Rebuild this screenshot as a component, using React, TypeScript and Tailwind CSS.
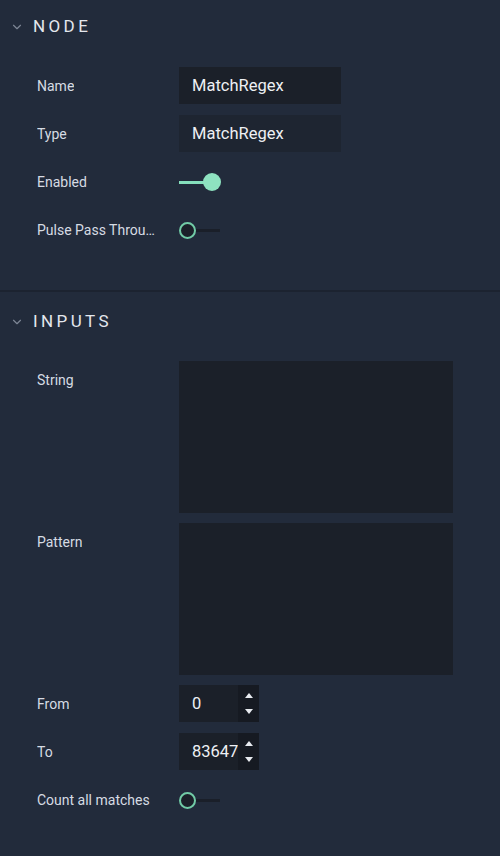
import { ChevronDown } from 'lucide-react';

const font = { fontFamily: 'Roboto, "Noto Sans", sans-serif' };

function Header({ title }: { title: string }) {
  return (
    <div className="flex items-center h-[54px] pl-[10px]">
      <ChevronDown size={14} strokeWidth={2} className="text-[#7d8594]" />
      <span className="ml-[9px] text-[17px] tracking-[0.2em] text-[#e4e7ed]">{title}</span>
    </div>
  );
}

function Row({ label, children }: { label: string; children: React.ReactNode }) {
  return (
    <div className="flex items-start">
      <div className="w-[179px] shrink-0 pl-[37px] pr-[21px] h-[38px] flex items-center">
        <span className="text-[14px] text-[#d6dbe3] truncate">{label}</span>
      </div>
      {children}
    </div>
  );
}

function TextBox({ value, dim }: { value: string; dim?: boolean }) {
  return (
    <div className={`w-[162px] h-[37px] flex items-center pt-[2px] px-[13px] text-[16.5px] text-[#eef0f4] ${dim ? 'bg-[#1e2531]' : 'bg-[#1b2029]'}`}>
      {value}
    </div>
  );
}

function Toggle({ on }: { on: boolean }) {
  if (on) {
    return (
      <div className="h-[38px] flex items-center">
        <div className="w-[26px] h-[3px] bg-[#86dfbd]" />
        <div className="w-[18px] h-[18px] -ml-[2px] rounded-full bg-[#8ee2c0]" />
      </div>
    );
  }
  return (
    <div className="h-[38px] flex items-center">
      <div className="w-[17px] h-[17px] rounded-full border-2 border-[#71cba6] bg-[#1b2029]" />
      <div className="w-[24px] h-[3px] bg-[#1a1f29]" />
    </div>
  );
}

function NumberBox({ value }: { value: string }) {
  return (
    <div className="w-[80px] h-[37px] flex bg-[#1b2029]">
      <div className="flex-1 flex items-center pt-[2px] pl-[13px] text-[16.5px] text-[#eef0f4]">{value}</div>
      <div className="w-[21px] bg-[#161a22] flex flex-col items-center justify-center gap-[11px]">
        <svg width="8" height="5" viewBox="0 0 8 5"><path d="M0 5 L4 0 L8 5 Z" fill="#e8ebf0" /></svg>
        <svg width="8" height="5" viewBox="0 0 8 5"><path d="M0 0 L4 5 L8 0 Z" fill="#e8ebf0" /></svg>
      </div>
    </div>
  );
}

export default function App() {
  return (
    <div className="w-[500px] h-[856px] bg-[#222b3b] overflow-hidden" style={font}>
      {/* NODE */}
      <section className="h-[290px]">
        <Header title="NODE" />
        <div className="mt-[13px] flex flex-col gap-[10px]">
          <Row label="Name"><TextBox value="MatchRegex" /></Row>
          <Row label="Type"><TextBox value="MatchRegex" dim /></Row>
          <Row label="Enabled"><Toggle on /></Row>
          <Row label="Pulse Pass Through"><Toggle on={false} /></Row>
        </div>
      </section>
      <div className="h-[2px] bg-[#1c2330]" />

      {/* INPUTS */}
      <section className="pt-[3px]">
        <Header title="INPUTS" />
        <div className="mt-[12px] flex flex-col gap-[10px]">
          <Row label="String"><div className="w-[274px] h-[152px] bg-[#1b2029]" /></Row>
          <Row label="Pattern"><div className="w-[274px] h-[152px] bg-[#1b2029]" /></Row>
          <Row label="From"><NumberBox value="0" /></Row>
          <Row label="To"><NumberBox value="83647" /></Row>
          <Row label="Count all matches"><Toggle on={false} /></Row>
        </div>
      </section>
    </div>
  );
}
